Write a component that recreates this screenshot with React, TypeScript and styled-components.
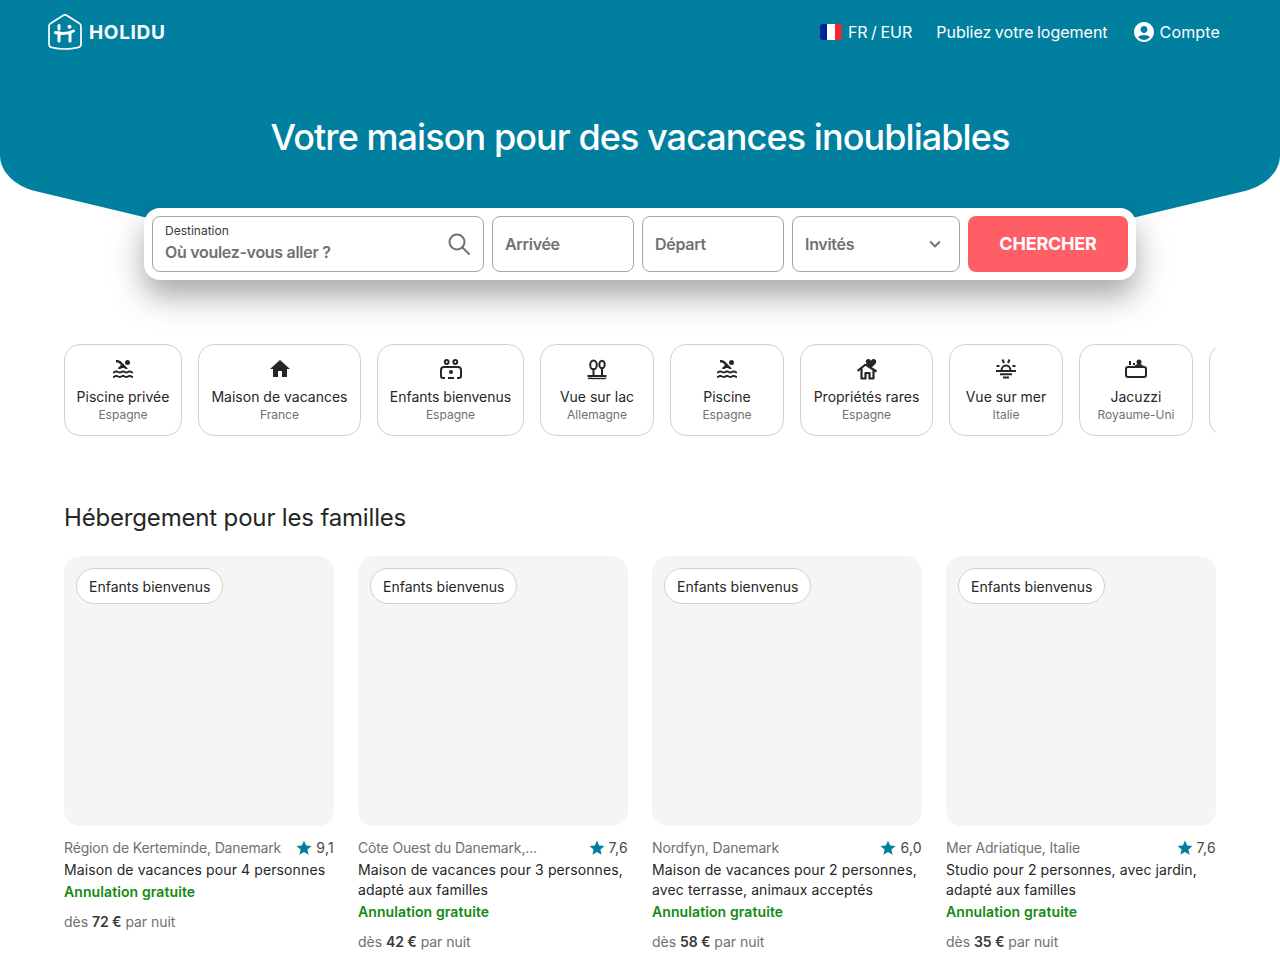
import React from "react";
import styled, { createGlobalStyle } from "styled-components";
import { MdPool, MdHome, MdStar, MdAccountCircle, MdExpandMore } from "react-icons/md";

const GlobalStyle = createGlobalStyle`
  * { box-sizing: border-box; }
  body {
    margin: 0;
    background: #fff;
    font-family: Inter, "Liberation Sans", sans-serif;
    color: #262626;
  }
`;

const Logo = () => (
  <LogoWrap>
    <svg width="34" height="36" viewBox="0 0 34 36" fill="none">
      <path
        d="M15.500 1.300 C16.400 .7 17.600 .7 18.500 1.300 L31.500 9.500 C32.500 10.100 33 11 33 12 V30 C33 32 32 33 30.500 33.400 C22 35.400 12 35.400 3.500 33.400 C2 33 1 32 1 30 V12 C1 11 1.500 10.100 2.500 9.500 Z"
        stroke="#fff"
        strokeWidth="1.7"
        strokeLinejoin="round"
      />
      <path d="M11 11.500V15 M11 18.500V27 M22 19V27" stroke="#fff" strokeWidth="3" strokeLinecap="round" />
      <path d="M7.500 18.500C13 19.800 20 19.800 25.500 17" stroke="#fff" strokeWidth="3" strokeLinecap="round" />
      <circle cx="21.500" cy="12.800" r="2" fill="#fff" />
    </svg>
    <LogoText>HOLIDU</LogoText>
  </LogoWrap>
);

const Flag = () => (
  <FlagBox>
    <FlagPart $c="#002395" />
    <FlagPart $c="#fff" />
    <FlagPart $c="#ed2939" />
  </FlagBox>
);

const SearchGlyph = () => (
  <svg width="22" height="22" viewBox="0 0 22 22" fill="none" stroke="#73706e" strokeWidth="2" strokeLinecap="round">
    <circle cx="9" cy="9" r="7.500" />
    <path d="M14.500 14.500L21 21" />
  </svg>
);

const Kids = () => (
  <svg width="22" height="22" viewBox="0 0 22 22" fill="none" stroke="#262626" strokeWidth="2">
    <circle cx="6.700" cy="4" r="1.900" />
    <circle cx="15.300" cy="4" r="1.900" />
    <path d="M5 20H3C1.800 20 1 19.200 1 18V12C1 10.200 2.200 9 4 9H18C19.800 9 21 10.200 21 12V18C21 19.200 20.200 20 19 20H17" />
    <path d="M8 20H14" />
    <circle cx="11" cy="14" r="2" fill="#262626" stroke="none" />
  </svg>
);

const Lake = () => (
  <svg width="22" height="22" viewBox="0 0 22 22" fill="none" stroke="#262626" strokeWidth="2">
    <path d="M7.500 17V10M16 17V9" />
    <ellipse cx="7.500" cy="7" rx="3.300" ry="4.500" />
    <ellipse cx="16" cy="6.500" rx="2.700" ry="3.800" />
    <path d="M1.500 18H20.500" />
    <path d="M2 20.500C4 20 5 20 6.500 20.500C8 21 9.500 20 11 20.500C12.500 21 14 20 15.500 20.500C17 21 18.500 20 20 20.500" strokeWidth="1.500" />
  </svg>
);

const RareHouse = () => (
  <svg width="22" height="22" viewBox="0 0 22 22" fill="none">
    <path d="M1.500 13L9.500 6.500M9.500 6.500L20.500 13.500M5.500 10.500V20.500H9.500V15H13.500V20.500H17.500V12" stroke="#262626" strokeWidth="2.200" strokeLinejoin="round" />
    <path d="M15 9.500C11 7 9.800 5 9.800 3.400C9.800 1 13.500 0 15 2.700C16.500 0 20.200 1 20.200 3.400C20.200 5 19 7 15 9.500Z" fill="#262626" />
  </svg>
);

const SeaView = () => (
  <svg width="22" height="22" viewBox="0 0 22 22" fill="none" stroke="#262626" strokeWidth="2">
    <path d="M6.500 12.500C6.500 9.500 8.500 7.500 11 7.500C13.500 7.500 15.500 9.500 15.500 12.500" />
    <path d="M1 13H21" />
    <path d="M7.500 1.500L9 5M14.500 1.500L13 5M1.500 8H4.500M17.500 8H20.500" />
    <path d="M5 16.300H17M8 19.500H14" />
  </svg>
);

const Jacuzzi = () => (
  <svg width="22" height="22" viewBox="0 0 22 22" fill="none" stroke="#262626" strokeWidth="2">
    <rect x="1" y="9" width="20" height="10" rx="2" />
    <path d="M5 3V7M9 5V7" />
    <circle cx="14" cy="4" r="2.500" fill="#262626" stroke="none" />
    <path d="M10.500 8.500C11.500 6.500 16.500 6.500 17.500 8.500" />
  </svg>
);

const categories = [
  { icon: <MdPool size={24} />, title: "Piscine privée", place: "Espagne", width: 118 },
  { icon: <MdHome size={24} />, title: "Maison de vacances", place: "France", width: 163 },
  { icon: <Kids />, title: "Enfants bienvenus", place: "Espagne", width: 147 },
  { icon: <Lake />, title: "Vue sur lac", place: "Allemagne", width: 114 },
  { icon: <MdPool size={24} />, title: "Piscine", place: "Espagne", width: 114 },
  { icon: <RareHouse />, title: "Propriétés rares", place: "Espagne", width: 133 },
  { icon: <SeaView />, title: "Vue sur mer", place: "Italie", width: 114 },
  { icon: <Jacuzzi />, title: "Jacuzzi", place: "Royaume-Uni", width: 114 },
];

const homes = [
  { place: "Région de Kerteminde, Danemark", rate: "9,1", title: "Maison de vacances pour 4 personnes", price: "72 €" },
  { place: "Côte Ouest du Danemark,...", rate: "7,6", title: "Maison de vacances pour 3 personnes, adapté aux familles", price: "42 €" },
  { place: "Nordfyn, Danemark", rate: "6,0", title: "Maison de vacances pour 2 personnes, avec terrasse, animaux acceptés", price: "58 €" },
  { place: "Mer Adriatique, Italie", rate: "7,6", title: "Studio pour 2 personnes, avec jardin, adapté aux familles", price: "35 €" },
];

export default function App() {
  return (
    <>
      <GlobalStyle />
      <Hero>
        <HeroShape />
        <Nav>
          <Logo />
          <NavLinks>
            <NavLink>
              <Flag />
              FR / EUR
            </NavLink>
            <NavLink>Publiez votre logement</NavLink>
            <AccountLink>
              <MdAccountCircle size={24} />
              Compte
            </AccountLink>
          </NavLinks>
        </Nav>
        <Title>Votre maison pour des vacances inoubliables</Title>
        <SearchBar>
          <DestField>
            <DestText>
              <FieldLabel>Destination</FieldLabel>
              <DestValue>Où voulez-vous aller ?</DestValue>
            </DestText>
            <SearchGlyph />
          </DestField>
          <DateField>Arrivée</DateField>
          <DateField>Départ</DateField>
          <GuestField>
            Invités
            <MdExpandMore size={22} />
          </GuestField>
          <SearchButton>CHERCHER</SearchButton>
        </SearchBar>
      </Hero>
      <Main>
        <CategoryRow>
          {categories.map((c) => (
            <Category key={c.title} $w={c.width}>
              <CategoryIcon>{c.icon}</CategoryIcon>
              <CategoryTitle>{c.title}</CategoryTitle>
              <CategoryPlace>{c.place}</CategoryPlace>
            </Category>
          ))}
          <Category $w={114} />
        </CategoryRow>
        <SectionTitle>Hébergement pour les familles</SectionTitle>
        <CardGrid>
          {homes.map((h) => (
            <Card key={h.place}>
              <Photo>
                <Badge>Enfants bienvenus</Badge>
              </Photo>
              <PlaceRow>
                <Place>{h.place}</Place>
                <Rating>
                  <MdStar size={18} color="#007f9f" />
                  {h.rate}
                </Rating>
              </PlaceRow>
              <HomeTitle>{h.title}</HomeTitle>
              <Cancel>Annulation gratuite</Cancel>
              <Price>
                dès <b>{h.price}</b> par nuit
              </Price>
            </Card>
          ))}
        </CardGrid>
      </Main>
    </>
  );
}

const Hero = styled.header`
  position: relative;
  height: 280px;
  padding: 0 60px 0 48px;
  display: flex;
  flex-direction: column;
`;

const HeroShape = styled.div`
  position: absolute;
  left: 0;
  top: 0;
  width: 1280px;
  height: 240px;
  background: #007f9f;
  clip-path: path("M0 0H1280V155C1280 172 1265 186 1245 191L1040 240H240L35 191C15 186 0 172 0 155Z");
`;

const Nav = styled.nav`
  position: relative;
  height: 64px;
  display: flex;
  align-items: center;
  justify-content: space-between;
`;

const LogoWrap = styled.div`
  display: flex;
  align-items: center;
  gap: 7px;
`;

const LogoText = styled.span`
  color: #fff;
  font-family: Inter, sans-serif;
  font-weight: 700;
  font-size: 19px;
  letter-spacing: 0.65px;
`;

const NavLinks = styled.div`
  display: flex;
  align-items: center;
  gap: 24px;
`;

const NavLink = styled.a`
  display: flex;
  align-items: center;
  gap: 6px;
  color: #fff;
  font-size: 16px;
  line-height: 24px;
  word-spacing: -1px;
`;

const AccountLink = styled(NavLink)`
  gap: 4px;
  letter-spacing: 0.15px;
`;

const FlagBox = styled.span`
  display: flex;
  width: 22px;
  height: 16px;
  border-radius: 3px;
  overflow: hidden;
`;

const FlagPart = styled.span<{ $c: string }>`
  flex: 1;
  background: ${(p) => p.$c};
`;

const Title = styled.h1`
  position: relative;
  margin: 47px 0 0 12px;
  text-align: center;
  color: #fff;
  font-family: Inter, sans-serif;
  font-weight: 500;
  font-size: 36px;
  line-height: 52px;
  letter-spacing: -0.93px;
`;

const SearchBar = styled.div`
  position: absolute;
  left: 144px;
  top: 208px;
  width: 992px;
  height: 72px;
  padding: 8px;
  display: flex;
  gap: 8px;
  background: #fff;
  border-radius: 16px;
  box-shadow: 0 16px 32px rgba(0, 0, 0, 0.35);
`;

const Field = styled.div`
  height: 56px;
  border: 1px solid #a8a6a4;
  border-radius: 8px;
  padding: 0 12px;
  display: flex;
  align-items: center;
  color: #73706e;
  font-weight: 600;
  font-size: 16px;
  letter-spacing: -0.3px;
`;

const DestField = styled(Field)`
  width: 332px;
  justify-content: space-between;
  padding-right: 13px;
`;

const DestText = styled.div`
  display: flex;
  flex-direction: column;
`;

const FieldLabel = styled.span`
  color: #3a3a3a;
  font-weight: 400;
  font-size: 12px;
  line-height: 16px;
  letter-spacing: 0;
  margin: -2px 0 1px;
`;

const DestValue = styled.span`
  line-height: 24px;
`;

const DateField = styled(Field)`
  width: 142px;
`;

const GuestField = styled(Field)`
  width: 168px;
  justify-content: space-between;
  svg {
    margin-right: 1px;
  }
`;

const SearchButton = styled.button`
  flex: 1;
  height: 56px;
  border: 0;
  border-radius: 8px;
  background: #ff5e67;
  color: #fff;
  font-family: inherit;
  font-weight: 700;
  font-size: 18px;
  letter-spacing: -0.2px;
  padding-bottom: 2px;
`;

const Main = styled.main`
  padding: 64px 64px 0;
`;

const CategoryRow = styled.div`
  display: flex;
  gap: 16px;
  overflow: hidden;
`;

const Category = styled.div<{ $w: number }>`
  flex: none;
  width: ${(p) => p.$w}px;
  height: 92px;
  padding-top: 12px;
  border: 1px solid #d3d1cf;
  border-radius: 16px;
  display: flex;
  flex-direction: column;
  align-items: center;
`;

const CategoryIcon = styled.div`
  height: 24px;
  display: flex;
  align-items: center;
  justify-content: center;
  color: #262626;
`;

const CategoryTitle = styled.div`
  margin-top: 6px;
  font-size: 14px;
  line-height: 20px;
  white-space: nowrap;
`;

const CategoryPlace = styled.div`
  font-size: 12px;
  line-height: 16px;
  color: #73706e;
`;

const SectionTitle = styled.h2`
  margin: 65px 0 21px;
  font-weight: 400;
  font-size: 24px;
  line-height: 33px;
  letter-spacing: -0.17px;
  padding-bottom: 1px;
`;

const CardGrid = styled.div`
  display: grid;
  grid-template-columns: repeat(4, 270px);
  gap: 24px;
`;

const Card = styled.article`
  display: flex;
  flex-direction: column;
`;

const Photo = styled.div`
  position: relative;
  height: 270px;
  border-radius: 16px;
  background: #f6f5f4;
`;

const Badge = styled.span`
  position: absolute;
  left: 12px;
  top: 12px;
  height: 36px;
  padding: 0 12px;
  display: flex;
  align-items: center;
  background: #fff;
  border: 1px solid #d3d1cf;
  border-radius: 18px;
  font-size: 14px;
`;

const PlaceRow = styled.div`
  margin-top: 12px;
  display: flex;
  justify-content: space-between;
  font-size: 14px;
  line-height: 20px;
`;

const Place = styled.span`
  color: #73706e;
  letter-spacing: -0.15px;
`;

const Rating = styled.span`
  display: flex;
  align-items: center;
  gap: 3px;
  color: #4a4a4a;
  letter-spacing: 0.3px;
`;

const HomeTitle = styled.div`
  margin-top: 2px;
  font-size: 14px;
  line-height: 20px;
  letter-spacing: 0.11px;
`;

const Cancel = styled.div`
  margin-top: 2px;
  color: #118b11;
  font-weight: 600;
  font-size: 14px;
  line-height: 20px;
  letter-spacing: 0.1px;
`;

const Price = styled.div`
  margin-top: 10px;
  color: #73706e;
  font-size: 14px;
  line-height: 20px;
  letter-spacing: -0.05px;
  b {
    color: #3a3a3a;
    font-weight: 600;
  }
`;
